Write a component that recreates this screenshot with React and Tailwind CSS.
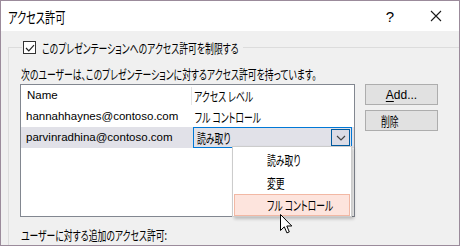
const jp = "font-['Noto_Sans_CJK_JP',sans-serif] [font-feature-settings:'palt']"
const en = "font-['Liberation_Sans','Noto_Sans_CJK_JP',sans-serif]"

// Japanese UI text is narrow (Meiryo UI style), so squeeze Noto CJK horizontally
function J({ children, className = '' }) {
  return (
    <span className={`${jp} inline-block origin-left scale-x-[0.68] whitespace-nowrap ${className}`}>
      {children}
    </span>
  )
}

function CloseIcon() {
  return (
    <svg width="12" height="12" viewBox="0 0 12 12">
      <path d="M1 1L11 11M11 1L1 11" stroke="#1a1a1a" strokeWidth="1.1" fill="none" />
    </svg>
  )
}

function Chevron() {
  return (
    <svg width="10" height="6" viewBox="0 0 10 6">
      <path d="M1 1L5 5L9 1" stroke="#444" strokeWidth="1.2" fill="none" />
    </svg>
  )
}

function Cursor() {
  return (
    <svg width="13" height="20" viewBox="0 0 13 20">
      <path
        d="M0.5 0.5V16.5L4.3 12.8L6.9 18.9L9.3 17.9L6.8 12H11.8Z"
        fill="#fff"
        stroke="#000"
        strokeWidth="1"
      />
    </svg>
  )
}

export default function App() {
  return (
    <div className="relative flex h-[246px] w-[460px] flex-col overflow-hidden border border-[#9b8b9b] bg-[#f0f0f0] text-[#000]">
      {/* Title bar */}
      <div className="flex h-[30px] shrink-0 items-center bg-white pl-[7px]">
        <J className="text-[15px] leading-none">アクセス許可</J>
        <span className={`${en} ml-auto mr-[36px] text-[15px] leading-none`}>?</span>
        <span className="mr-[17px] flex items-center">
          <CloseIcon />
        </span>
      </div>

      {/* Group box */}
      <fieldset className="ml-[7px] mr-[5px] mt-[7px] flex-1 border border-b-0 border-[#dcdcdc] pl-[12px] pr-[14px]">
        <legend className="ml-[1px] flex items-center gap-[6px] px-[1px]">
          <span className="flex h-[13px] w-[13px] items-center justify-center border border-[#333] bg-white">
            <svg width="10" height="8" viewBox="0 0 10 8">
              <path d="M1 4L3.8 6.8L9 1.2" stroke="#222" strokeWidth="1.2" fill="none" />
            </svg>
          </span>
          <span className="w-[200px] leading-[18px]">
            <J className="text-[13px]">このプレゼンテーションへのアクセス許可を制限する</J>
          </span>
        </legend>

        <p className="mt-[8px] leading-[16px]">
          <J className="text-[13px]">次のユーザーは、このプレゼンテーションに対するアクセス許可を持っています。</J>
        </p>

        <div className="mt-[2px] flex">
          {/* List view */}
          <div className="ml-[-1px] h-[133px] w-[335px] border border-[#828790] bg-white">
            <div className="flex h-[21px] items-center">
              <span className={`${en} w-[170px] pl-[6px] text-[11.5px]`}>Name</span>
              <span className="h-[18px] w-px bg-[#e5e5e5]" />
              <J className="pl-[3px] text-[13px]">アクセス レベル</J>
            </div>
            <div className="flex h-[21px] items-center">
              <span className={`${en} w-[171px] pl-[5px] text-[11.5px]`}>hannahhaynes@contoso.com</span>
              <J className="pl-[4px] text-[13px]">フル コントロール</J>
            </div>
            <div className="flex h-[21px] items-center bg-[#e1e1e8]">
              <span className={`${en} w-[170px] pl-[5px] text-[11.5px]`}>parvinradhina@contoso.com</span>
              <div className="ml-[2px] flex h-[21px] w-[159px] items-center border border-[#0078d7] pl-[3px] pr-[1px]">
                <J className="text-[13px]">読み取り</J>
                <span className="ml-auto flex h-[17px] w-[19px] items-center justify-center border border-[#005a9e] bg-[#dcdce6]">
                  <Chevron />
                </span>
              </div>
            </div>
          </div>

          {/* Buttons */}
          <div className="ml-[10px] flex flex-col gap-[5px]">
            <button className={`${en} flex h-[21px] w-[73px] items-center justify-center border border-[#adadad] bg-[#e1e1e1] text-[12px]`}>
              <span className="underline underline-offset-2">A</span>dd...
            </button>
            <button className="flex h-[21px] w-[73px] items-center border border-[#adadad] bg-[#e1e1e1] pl-[15px]">
              <J className="text-[13px]">削除</J>
            </button>
          </div>
        </div>

        <p className="mt-[9px] leading-[16px]">
          <J className="text-[13px]">ユーザーに対する追加のアクセス許可:</J>
        </p>
      </fieldset>

      {/* Open dropdown list */}
      <div className="absolute left-[231px] top-[145px] flex h-[71px] w-[120px] flex-col border border-[#cccccc] bg-white pt-px shadow-[2px_2px_3px_rgba(0,0,0,0.22)]">
        <div className="flex h-[23px] items-center pl-[34px]">
          <J className="text-[13px]">読み取り</J>
        </div>
        <div className="flex h-[23px] items-center pl-[34px]">
          <J className="text-[13px]">変更</J>
        </div>
        <div className="mx-[1px] flex h-[22px] items-center border border-[#f2b8a4] bg-[#fde4dd] pl-[32px]">
          <J className="text-[13px]">フル コントロール</J>
        </div>
      </div>

      <div className="absolute left-[279px] top-[213px]">
        <Cursor />
      </div>
    </div>
  )
}
